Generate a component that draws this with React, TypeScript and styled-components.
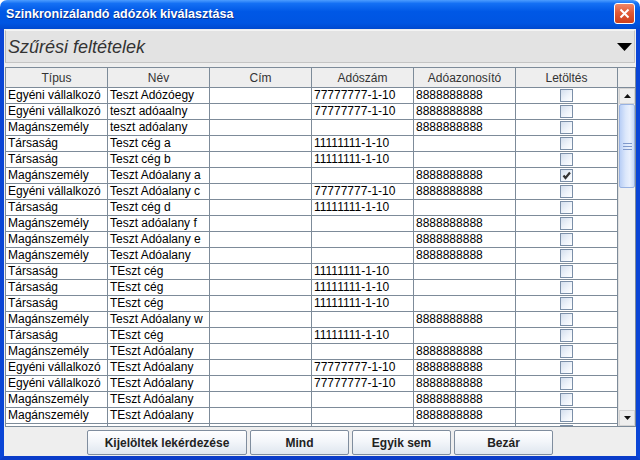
import styled, { createGlobalStyle } from 'styled-components'

type Row = {
  type: string
  name: string
  taxNo: string
  taxId: string
  checked?: boolean
}

const C7 = '77777777-1-10'
const C1 = '11111111-1-10'
const ID = '8888888888'
const EV = 'Egyéni vállalkozó'
const MS = 'Magánszemély'
const TS = 'Társaság'

const rows: Row[] = [
  { type: EV, name: 'Teszt Adózóegy', taxNo: C7, taxId: ID },
  { type: EV, name: 'teszt adóaalny', taxNo: C7, taxId: ID },
  { type: MS, name: 'teszt adóalany', taxNo: '', taxId: ID },
  { type: TS, name: 'Teszt cég a', taxNo: C1, taxId: '' },
  { type: TS, name: 'Teszt cég b', taxNo: C1, taxId: '' },
  { type: MS, name: 'Teszt Adóalany a', taxNo: '', taxId: ID, checked: true },
  { type: EV, name: 'Teszt Adóalany c', taxNo: C7, taxId: ID },
  { type: TS, name: 'Teszt cég d', taxNo: C1, taxId: '' },
  { type: MS, name: 'Teszt adóalany f', taxNo: '', taxId: ID },
  { type: MS, name: 'Teszt Adóalany e', taxNo: '', taxId: ID },
  { type: MS, name: 'Teszt Adóalany', taxNo: '', taxId: ID },
  { type: TS, name: 'TEszt cég', taxNo: C1, taxId: '' },
  { type: TS, name: 'TEszt cég', taxNo: C1, taxId: '' },
  { type: TS, name: 'TEszt cég', taxNo: C1, taxId: '' },
  { type: MS, name: 'Teszt Adóalany w', taxNo: '', taxId: ID },
  { type: TS, name: 'TEszt cég', taxNo: C1, taxId: '' },
  { type: MS, name: 'TEszt Adóalany', taxNo: '', taxId: ID },
  { type: EV, name: 'TEszt Adóalany', taxNo: C7, taxId: ID },
  { type: EV, name: 'TEszt Adóalany', taxNo: C7, taxId: ID },
  { type: MS, name: 'TEszt Adóalany', taxNo: '', taxId: ID },
  { type: MS, name: 'TEszt Adóalany', taxNo: '', taxId: ID },
  // only its top edge shows below the fold
  { type: '', name: '', taxNo: '', taxId: '' },
]

const columns = ['Típus', 'Név', 'Cím', 'Adószám', 'Adóazonosító', 'Letöltés']

const GRID = '#7d8b99'

const GlobalStyle = createGlobalStyle`
  html, body {
    margin: 0;
    padding: 0;
    background: #ffffff;
  }
  * {
    box-sizing: border-box;
  }
`

const Window = styled.div`
  width: 640px;
  height: 460px;
  display: flex;
  flex-direction: column;
  font-family: 'Liberation Sans', Arial, sans-serif;
`

const TitleBar = styled.div`
  height: 29px;
  flex: none;
  display: flex;
  align-items: center;
  justify-content: space-between;
  padding: 0 5px 0 6px;
  border-radius: 7px 7px 0 0;
  background: linear-gradient(
    180deg,
    #4d9dff 0%,
    #1470f4 12%,
    #0058e6 40%,
    #0055e2 80%,
    #0049cf 100%
  );
`

const Title = styled.span`
  color: #ffffff;
  font-weight: bold;
  font-size: 12.6px;
  margin-top: -2px;
  text-shadow: 1px 1px 0 #0a2e8c;
`

const CloseButton = styled.div`
  width: 21px;
  height: 21px;
  margin-top: -2px;
  border: 1px solid #ffffff;
  border-radius: 3px;
  background: linear-gradient(180deg, #f0876a 0%, #e05a37 45%, #cd3f1c 100%);
  display: flex;
  align-items: center;
  justify-content: center;
`

const Frame = styled.div`
  flex: 1;
  display: flex;
  flex-direction: column;
  background: #eeeeee;
  border-left: 4px solid #0a45d6;
  border-right: 4px solid #0a45d6;
  border-bottom: 4px solid #0a3cc9;
`

const FilterPanel = styled.div`
  height: 33px;
  margin: 1px 1px 4px 1px;
  border: 1px solid #c4c4c4;
  border-top-color: #f4f4f4;
  border-left-color: #b8b8b8;
  background: #e3e3e3;
  display: flex;
  align-items: center;
  justify-content: space-between;
  padding: 0 2px 0 2px;
`

const FilterTitle = styled.span`
  font-style: italic;
  font-size: 18px;
  color: #333333;
  margin-top: 1px;
`

const ScrollPane = styled.div`
  width: 631px;
  height: 360px;
  margin-left: 1px;
  border: 1px solid ${GRID};
  display: grid;
  grid-template-columns: 612px 17px;
  grid-template-rows: 20px 338px;
  background: #ffffff;
`

const HeaderRow = styled.div`
  display: grid;
  grid-template-columns: repeat(6, 102px);
  background: #eeeeee;
`

const HeaderCell = styled.div`
  border-right: 1px solid ${GRID};
  border-bottom: 1px solid ${GRID};
  display: flex;
  align-items: center;
  justify-content: center;
  font-size: 12px;
  color: #333333;
  padding-top: 1px;
`

const Corner = styled.div`
  background: #eeeeee;
  border-bottom: 1px solid ${GRID};
`

const Viewport = styled.div`
  overflow: hidden;
`

const DataRow = styled.div`
  display: grid;
  grid-template-columns: repeat(6, 102px);
  height: 16px;
`

const Cell = styled.div<{ $center?: boolean }>`
  border-right: 1px solid ${GRID};
  border-bottom: 1px solid ${GRID};
  font-size: 12px;
  color: #000000;
  line-height: 15px;
  padding-left: 2px;
  white-space: nowrap;
  overflow: hidden;
  display: flex;
  align-items: center;
  justify-content: ${({ $center }) => ($center ? 'center' : 'flex-start')};
`

const Check = styled.div`
  width: 13px;
  height: 13px;
  margin-left: -2px;
  margin-top: -1px;
  border: 1px solid #7b8fa8;
  background: linear-gradient(135deg, #d4dfee 0%, #eef3fa 55%, #ffffff 100%);
  display: flex;
  align-items: center;
  justify-content: center;
`

const ScrollBar = styled.div`
  display: flex;
  flex-direction: column;
  background: #f1f1f1;
  border-left: 1px solid #e0e0e0;
`

const ArrowButton = styled.div`
  height: 16px;
  flex: none;
  background: #eeeeee;
  border: 1px solid #d4d4d4;
  display: flex;
  align-items: center;
  justify-content: center;
`

const Thumb = styled.div`
  height: 84px;
  flex: none;
  border: 1px solid #98b2e2;
  border-radius: 2px;
  background: linear-gradient(90deg, #b9cff6 0%, #dbe7fb 40%, #e9f0fd 70%, #c9daf8 100%);
  display: flex;
  flex-direction: column;
  align-items: center;
  justify-content: center;
  gap: 2px;
`

const Grip = styled.span`
  width: 9px;
  height: 1px;
  background: #7f99cc;
`

const Track = styled.div`
  flex: 1;
`

const ButtonBar = styled.div`
  margin-top: 3px;
  display: flex;
  justify-content: center;
  gap: 3px;
`

const Button = styled.button<{ $width: number }>`
  width: ${({ $width }) => $width}px;
  height: 25px;
  border: 1px solid #7f8d9e;
  border-radius: 2px;
  background: linear-gradient(180deg, #ffffff 0%, #f3f6fa 45%, #dfe6ef 100%);
  font-family: 'Liberation Sans', Arial, sans-serif;
  font-weight: bold;
  font-size: 12px;
  color: #222222;
  padding: 0;
`

function Triangle({ down }: { down?: boolean }) {
  return (
    <svg width="7" height="4" viewBox="0 0 7 4">
      <polygon points={down ? '0,0 7,0 3.5,4' : '0,4 7,4 3.5,0'} fill="#111" />
    </svg>
  )
}

function App() {
  return (
    <>
      <GlobalStyle />
      <Window>
        <TitleBar>
          <Title>Szinkronizálandó adózók kiválasztása</Title>
          <CloseButton>
            <svg width="11" height="11" viewBox="0 0 11 11">
              <path d="M1.5 1.5 L9.5 9.5 M9.5 1.5 L1.5 9.5" stroke="#fff" strokeWidth="2" />
            </svg>
          </CloseButton>
        </TitleBar>
        <Frame>
          <FilterPanel>
            <FilterTitle>Szűrési feltételek</FilterTitle>
            <svg width="15" height="8" viewBox="0 0 15 8">
              <polygon points="0,0 15,0 7.5,8" fill="#000" />
            </svg>
          </FilterPanel>
          <ScrollPane>
            <HeaderRow>
              {columns.map((c) => (
                <HeaderCell key={c}>{c}</HeaderCell>
              ))}
            </HeaderRow>
            <Corner />
            <Viewport>
              {rows.map((r, i) => (
                <DataRow key={i}>
                  <Cell>{r.type}</Cell>
                  <Cell>{r.name}</Cell>
                  <Cell />
                  <Cell>{r.taxNo}</Cell>
                  <Cell>{r.taxId}</Cell>
                  <Cell $center>
                    <Check>
                      {r.checked && (
                        <svg width="9" height="9" viewBox="0 0 9 9">
                          <path d="M1.5 4.5 L3.5 7 L8 1.5" stroke="#333" strokeWidth="2.2" fill="none" />
                        </svg>
                      )}
                    </Check>
                  </Cell>
                </DataRow>
              ))}
            </Viewport>
            <ScrollBar>
              <ArrowButton>
                <Triangle />
              </ArrowButton>
              <Thumb>
                <Grip />
                <Grip />
                <Grip />
              </Thumb>
              <Track />
              <ArrowButton>
                <Triangle down />
              </ArrowButton>
            </ScrollBar>
          </ScrollPane>
          <ButtonBar>
            <Button $width={160}>Kijelöltek lekérdezése</Button>
            <Button $width={99}>Mind</Button>
            <Button $width={99}>Egyik sem</Button>
            <Button $width={99}>Bezár</Button>
          </ButtonBar>
        </Frame>
      </Window>
    </>
  )
}

export default App
